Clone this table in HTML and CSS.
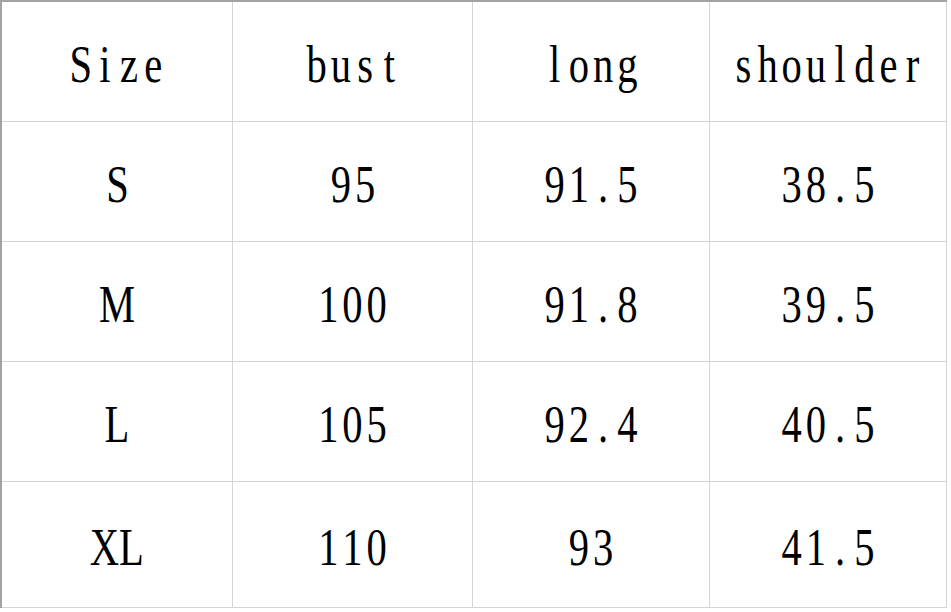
FILE: index.html
```html
<!DOCTYPE html>
<html>
<head>
<meta charset="utf-8">
<link rel="stylesheet" href="styles.css">
</head>
<body>
<div class="sheet">
  <div class="cell c1"><span class="t"><i>S</i><i>i</i><i>z</i><i>e</i></span></div>
  <div class="cell c2"><span class="t"><i>b</i><i>u</i><i>s</i><i>t</i></span></div>
  <div class="cell c3"><span class="t"><i>l</i><i>o</i><i>n</i><i>g</i></span></div>
  <div class="cell c4"><span class="t"><i>s</i><i>h</i><i>o</i><i>u</i><i>l</i><i>d</i><i>e</i><i>r</i></span></div>

  <div class="cell c1"><span class="t"><i>S</i></span></div>
  <div class="cell c2"><span class="t"><i>9</i><i>5</i></span></div>
  <div class="cell c3"><span class="t"><i>9</i><i>1</i><i>.</i><i>5</i></span></div>
  <div class="cell c4"><span class="t"><i>3</i><i>8</i><i>.</i><i>5</i></span></div>

  <div class="cell c1"><span class="t"><i>M</i></span></div>
  <div class="cell c2"><span class="t"><i>1</i><i>0</i><i>0</i></span></div>
  <div class="cell c3"><span class="t"><i>9</i><i>1</i><i>.</i><i>8</i></span></div>
  <div class="cell c4"><span class="t"><i>3</i><i>9</i><i>.</i><i>5</i></span></div>

  <div class="cell c1"><span class="t"><i>L</i></span></div>
  <div class="cell c2"><span class="t"><i>1</i><i>0</i><i>5</i></span></div>
  <div class="cell c3"><span class="t"><i>9</i><i>2</i><i>.</i><i>4</i></span></div>
  <div class="cell c4"><span class="t"><i>4</i><i>0</i><i>.</i><i>5</i></span></div>

  <div class="cell c1 last"><span class="t"><i>X</i><i>L</i></span></div>
  <div class="cell c2 last"><span class="t"><i>1</i><i>1</i><i>0</i></span></div>
  <div class="cell c3 last"><span class="t"><i>9</i><i>3</i></span></div>
  <div class="cell c4 last"><span class="t"><i>4</i><i>1</i><i>.</i><i>5</i></span></div>
</div>
</body>
</html>
```
FILE: styles.css
```css
html, body {
  margin: 0;
  padding: 0;
  background: #ffffff;
}

.sheet {
  display: grid;
  grid-template-columns: 231px 240px 237px 237px;
  grid-template-rows: 120px 120px 120px 120px 126px;
  width: 945px;
  border-top: 2px solid #a3a3a3;
  border-left: 2px solid #a3a3a3;
  font-family: "Liberation Serif", "Times New Roman", serif;
  font-size: 52px;
  color: #000000;
}

.cell {
  display: flex;
  align-items: center;
  justify-content: center;
  padding-top: 6px;
  border-right: 1px solid #d4d4d4;
  border-bottom: 1px solid #d4d4d4;
  box-sizing: border-box;
}

.t {
  display: inline-flex;
  white-space: nowrap;
  transform: scaleX(0.78);
}

.t i {
  font-style: normal;
  display: inline-block;
  min-width: 31px;
  text-align: center;
}
```
